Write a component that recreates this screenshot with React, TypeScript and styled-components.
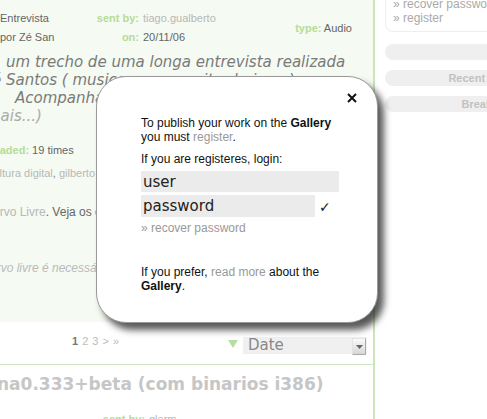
import styled, { createGlobalStyle } from "styled-components";

const GlobalStyle = createGlobalStyle`
  html, body {
    margin: 0;
    padding: 0;
    height: 100%;
    overflow: hidden;
    background: #fff;
  }
  body {
    font-family: "Liberation Sans", Arial, sans-serif;
  }
`;

const Page = styled.div`
  position: relative;
  display: flex;
  width: 600px;
  height: 419px;
`;

const Main = styled.div`
  width: 373px;
  flex-shrink: 0;
  border-right: 2px solid #c9e5b9;
  overflow: hidden;
  white-space: nowrap;
`;

const Item = styled.div`
  height: 322px;
  background: #f5faf2;
`;

const Meta = styled.div<{ $top: number }>`
  display: flex;
  align-items: center;
  padding: ${(p) => p.$top}px 21px 0 0;
  font-size: 11px;
  line-height: 19px;
  color: #666;
`;

const MetaLeft = styled.div`
  width: 80px;
`;

const MetaGrid = styled.div<{ $labelWidth: number }>`
  display: grid;
  grid-template-columns: ${(p) => p.$labelWidth}px auto;
  column-gap: 4px;
`;

const Label = styled.span<{ $right?: boolean }>`
  font-weight: bold;
  color: #b5dc98;
  text-align: ${(p) => (p.$right ? "right" : "left")};
`;

const Muted = styled.span`
  color: #b8b8b8;
`;

const TypeBox = styled.div`
  margin-left: auto;
`;

const Description = styled.div`
  margin-top: 6px;
  font-family: "DejaVu Sans", sans-serif;
  font-style: italic;
  font-size: 15px;
  line-height: 18px;
  color: #7a7a7a;
`;

const Line = styled.div<{ $indent: number; $light?: boolean }>`
  text-indent: ${(p) => p.$indent}px;
  color: ${(p) => (p.$light ? "#aaa" : "inherit")};
`;

const Stats = styled.div`
  margin-top: 18px;
  font-size: 11px;
  line-height: 14px;
  color: #666;
  text-indent: -40px;
`;

const Tags = styled.div`
  margin-top: 9px;
  font-size: 11px;
  line-height: 14px;
  color: #888;
  text-indent: -12px;
`;

const BodyText = styled.div`
  margin-top: 25px;
  font-size: 12px;
  line-height: 14px;
  color: #666;
  text-indent: -21px;
`;

const Note = styled.div`
  margin-top: 42px;
  font-size: 12px;
  line-height: 14px;
  font-style: italic;
  color: #bbb;
  text-indent: -24px;
`;

const PagerRow = styled.div`
  display: flex;
  align-items: flex-start;
  height: 43px;
  box-sizing: border-box;
  padding: 15px 6px 0 72px;
  border-bottom: 1px solid #cfe7c3;
`;

const Pager = styled.div`
  margin-top: -3px;
  font-size: 11px;
  line-height: 14px;
  color: #bbb;
  word-spacing: 1px;
`;

const Current = styled.span`
  color: #777;
  font-weight: bold;
`;

const SortArrow = styled.svg`
  margin: 3px 5px 0 auto;
`;

const SortSelect = styled.div`
  display: flex;
  width: 124px;
  height: 17px;
  background: #f0f0f0;
  font-family: "DejaVu Sans", sans-serif;
  font-size: 15px;
  line-height: 17px;
  color: #888;
`;

const SortValue = styled.span`
  flex: 1;
  padding-left: 5px;
`;

const SortButton = styled.div`
  display: flex;
  align-items: center;
  justify-content: center;
  width: 12px;
  height: 15px;
  margin: 1px 1px 0 0;
  border: 1px solid #e4e4e4;
  border-right-color: #aaa;
  border-bottom-color: #aaa;
  background: linear-gradient(#fafafa, #d6d6d6);
`;

const Title = styled.div`
  margin-top: 9px;
  font-family: "DejaVu Sans", sans-serif;
  font-weight: bold;
  font-size: 17px;
  line-height: 20px;
  color: #c6c6c6;
  text-indent: -3px;
`;

const Sidebar = styled.div`
  margin-left: 10px;
  width: 200px;
  flex-shrink: 0;
  display: flex;
  flex-direction: column;
  gap: 10px;
`;

const AccountBox = styled.div`
  margin: -3px 0 2px;
  padding: 0 0 6px 7px;
  border: 1px solid #eee;
  border-top: none;
  border-radius: 0 0 8px 8px;
  font-size: 12px;
  line-height: 14px;
  color: #aaa;
  white-space: nowrap;
`;

const Pill = styled.div`
  height: 16px;
  border-radius: 8px;
  background: #efefef;
  font-size: 11px;
  font-weight: bold;
  line-height: 16px;
  color: #c2c2c2;
  text-align: center;
  white-space: nowrap;
`;

const Modal = styled.div`
  position: absolute;
  left: 96px;
  top: 76px;
  width: 282px;
  height: 247px;
  box-sizing: border-box;
  padding: 39px 0 0 44px;
  background: #fff;
  border: 1px solid #999;
  border-radius: 30px;
  box-shadow: 6px 7px 7px rgba(0, 0, 0, 0.65);
  font-size: 12px;
  line-height: 14px;
  color: #111;
`;

const Close = styled.svg`
  position: absolute;
  top: 16px;
  right: 20px;
`;

const Link = styled.span`
  color: #999;
`;

const Hint = styled.div<{ $gap: number }>`
  margin-top: ${(p) => p.$gap}px;
`;

const Field = styled.input<{ $width: number; $height: number }>`
  display: block;
  box-sizing: border-box;
  width: ${(p) => p.$width}px;
  height: ${(p) => p.$height}px;
  margin: 0;
  padding: 0 2px;
  border: none;
  outline: none;
  background: #ebebeb;
  font-family: "DejaVu Sans", sans-serif;
  font-size: 15px;
  color: #222;
`;

const UserField = styled(Field)`
  margin-top: 5px;
`;

const PasswordRow = styled.div`
  display: flex;
  align-items: flex-end;
  margin-top: 3px;
`;

const Check = styled.span`
  margin: 0 0 3px 4px;
  font-family: "DejaVu Sans", sans-serif;
  font-size: 14px;
  line-height: 14px;
  color: #222;
`;

const Recover = styled.div`
  margin-top: 4px;
  color: #999;
`;

export default function App() {
  return (
    <>
      <GlobalStyle />
      <Page>
        <Main>
          <Item>
            <Meta $top={9}>
              <MetaLeft>
                <div>Entrevista</div>
                <div>por Zé San</div>
              </MetaLeft>
              <MetaGrid $labelWidth={59}>
                <Label $right>sent by:</Label>
                <Muted>tiago.gualberto</Muted>
                <Label $right>on:</Label>
                <span>20/11/06</span>
              </MetaGrid>
              <TypeBox>
                <Label>type:</Label> Audio
              </TypeBox>
            </Meta>
            <Description>
              <Line $indent={6}>um trecho de uma longa entrevista realizada</Line>
              <Line $indent={-8}>é Santos ( musico e compositor baiano )</Line>
              <Line $indent={15}>Acompanhamento de Gilberto Gil</Line>
              <Line $indent={-14} $light>
                mais...)
              </Line>
            </Description>
            <Stats>
              <Label>Downloaded:</Label> 19 times
            </Stats>
            <Tags>
              <Muted>cultura digital</Muted>, <Muted>gilberto gil</Muted>,{" "}
              <Muted>musica</Muted>
            </Tags>
            <BodyText>
              <Muted>Acervo Livre</Muted>. Veja os outros trechos da entrevista
            </BodyText>
            <Note>Acervo livre é necessário para ouvir</Note>
          </Item>
          <PagerRow>
            <Pager>
              <Current>1</Current> 2 3 &gt; »
            </Pager>
            <SortArrow width="10" height="8" viewBox="0 0 10 8">
              <polygon points="0,0 10,0 5,8" fill="#b7dda2" />
            </SortArrow>
            <SortSelect>
              <SortValue>Date</SortValue>
              <SortButton>
                <svg width="7" height="4" viewBox="0 0 7 4">
                  <polygon points="0,0 7,0 3.5,4" fill="#666" />
                </svg>
              </SortButton>
            </SortSelect>
          </PagerRow>
          <Title>na0.333+beta (com binarios i386)</Title>
          <Meta $top={16}>
            <MetaLeft />
            <MetaGrid $labelWidth={65}>
              <Label $right>sent by:</Label>
              <Muted>glerm</Muted>
            </MetaGrid>
          </Meta>
        </Main>

        <Sidebar>
          <AccountBox>
            <div>» recover password</div>
            <div>» register</div>
          </AccountBox>
          <Pill />
          <Pill>Recent Works</Pill>
          <Pill>Breaking</Pill>
        </Sidebar>

        <Modal>
          <Close width="10" height="10" viewBox="0 0 10 10">
            <path d="M1 1 L9 9 M9 1 L1 9" stroke="#111" strokeWidth="2" />
          </Close>
          <div>
            To publish your work on the <b>Gallery</b>
            <br />
            you must <Link>register</Link>.
          </div>
          <Hint $gap={8}>If you are registeres, login:</Hint>
          <UserField $width={198} $height={21} defaultValue="user" readOnly />
          <PasswordRow>
            <Field $width={174} $height={22} defaultValue="password" readOnly />
            <Check>✓</Check>
          </PasswordRow>
          <Recover>» recover password</Recover>
          <Hint $gap={30}>
            If you prefer, <Link>read more</Link> about the
            <br />
            <b>Gallery</b>.
          </Hint>
        </Modal>
      </Page>
    </>
  );
}
